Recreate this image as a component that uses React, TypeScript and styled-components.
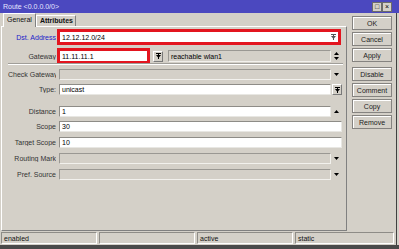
import React from "react";
import styled, { createGlobalStyle } from "styled-components";

const Global = createGlobalStyle`
  html, body { margin: 0; padding: 0; background: #d4d0c8; }
  body { font-family: "Liberation Sans", Arial, sans-serif; font-size: 7px; color: #222; }
`;

const Window = styled.div`
  width: 399px;
  height: 249px;
  box-sizing: border-box;
  display: flex;
  flex-direction: column;
  overflow: hidden;
  border-bottom: 4px solid #4a4a4a;
`;

const TitleBar = styled.div`
  height: 13px;
  flex: none;
  background: #4b48bf;
  display: flex;
  align-items: center;
  padding: 0 7px 0 3px;
  color: #e6e6ff;
`;

const TitleButtons = styled.div`
  margin-left: auto;
  display: flex;
`;

const TitleBtn = styled.div`
  width: 8px;
  height: 8px;
  background: #d4d0c8;
  border: 1px solid #6a6a6a;
  display: flex;
  align-items: center;
  justify-content: center;
  font-size: 7px;
  line-height: 1;
  color: #000;
`;

const Frame = styled.div`
  width: 397px;
  box-sizing: border-box;
  border-right: 1px solid #404040;
  display: flex;
  flex-direction: column;
  flex: 1;
`;

const Body = styled.div`
  height: 218px;
  display: flex;
`;

const Left = styled.div`
  width: 347px;
  display: flex;
  flex-direction: column;
`;

const Tabs = styled.div`
  height: 13px;
  display: flex;
  align-items: flex-end;
  padding-left: 3px;
  position: relative;
  z-index: 1;
`;

const Tab = styled.div<{ $active?: boolean }>`
  box-sizing: border-box;
  height: ${(p) => (p.$active ? "14px" : "11px")};
  margin-bottom: ${(p) => (p.$active ? "-1px" : "0")};
  padding: ${(p) => (p.$active ? "2px 3px 0 3px" : "1px 2px 0 3px")};
  background: #d4d0c8;
  border-top: 1px solid #ffffff;
  border-left: 1px solid #ffffff;
  border-right: 1px solid #808080;
  font-weight: ${(p) => (p.$active ? "normal" : "bold")};
  color: #111;
  white-space: nowrap;
`;

const Panel = styled.div`
  margin-left: 1px;
  width: 346px;
  height: 205px;
  box-sizing: border-box;
  border: 1px solid;
  border-color: #ffffff #808080 #808080 #ffffff;
  padding: 4px 4px 0 1px;
  display: flex;
  flex-direction: column;
`;

const Row = styled.div<{ $mt?: number; $h?: number }>`
  display: grid;
  grid-template-columns: 53px 283px;
  column-gap: 3px;
  align-items: center;
  height: ${(p) => p.$h ?? 11}px;
  margin-top: ${(p) => p.$mt ?? 0}px;
`;

const Label = styled.div<{ $blue?: boolean }>`
  padding-left: 5px;
  overflow: hidden;
  white-space: nowrap;
  text-align: right;
  color: ${(p) => (p.$blue ? "#1c1cc8" : "#333")};
`;

const Cell = styled.div`
  display: flex;
  align-items: center;
  height: 100%;
`;

const Field = styled.div<{ $w: number; $h?: number; $ml?: number; $disabled?: boolean; $red?: boolean }>`
  box-sizing: border-box;
  width: ${(p) => p.$w}px;
  height: ${(p) => (p.$h ? `${p.$h}px` : "100%")};
  margin-left: ${(p) => p.$ml ?? 0}px;
  flex: none;
  display: flex;
  align-items: center;
  padding: 0 2px;
  white-space: nowrap;
  overflow: hidden;
  color: #000;
  background: ${(p) => (p.$disabled ? "#d4d0c8" : "#ffffff")};
  border: 1px solid;
  border-color: ${(p) =>
    p.$red ? "#e3151f" : p.$disabled ? "#9a9893 #f2f1ed #f2f1ed #9a9893" : "#8e8c87 #e8e7e3 #e8e7e3 #8e8c87"};
  box-shadow: ${(p) => (p.$red ? "0 0 0 2px #e3151f" : "none")};
`;

const IconSlot = styled.div`
  width: 11px;
  height: 100%;
  display: flex;
  align-items: center;
  justify-content: center;
  flex: none;
`;

const SmallBtn = styled.div<{ $ml?: number }>`
  box-sizing: border-box;
  width: 10px;
  height: 11px;
  margin-left: ${(p) => p.$ml ?? 0}px;
  flex: none;
  background: #d4d0c8;
  border: 1px solid;
  border-color: #ffffff #7a7a7a #7a7a7a #ffffff;
  display: flex;
  align-items: center;
  justify-content: center;
`;

const InnerIcon = styled.span`
  margin-left: auto;
  display: flex;
  align-items: center;
`;

const Separator = styled.div`
  margin: 3px 0 0 5px;
  width: 335px;
  height: 0;
  border-top: 1px solid #a09e99;
  border-bottom: 1px solid #ffffff;
`;

const Right = styled.div`
  flex: 1;
  display: flex;
  flex-direction: column;
  padding: 3px 0 0 5px;
  gap: 2px;
`;

const Button = styled.div<{ $mt?: number }>`
  box-sizing: border-box;
  width: 40px;
  height: 14px;
  margin-top: ${(p) => p.$mt ?? 0}px;
  background: #d4d0c8;
  border: 1px solid #858380;
  box-shadow: inset 1px 1px 0 #ffffff;
  display: flex;
  align-items: center;
  justify-content: center;
  color: #222;
`;

const StatusBar = styled.div`
  height: 14px;
  display: flex;
  gap: 2px;
  padding: 1px 0 1px 1px;
  box-sizing: border-box;
`;

const StatusCell = styled.div<{ $w: number }>`
  box-sizing: border-box;
  width: ${(p) => p.$w}px;
  height: 12px;
  border: 1px solid;
  border-color: #8e8c87 #ffffff #ffffff #8e8c87;
  padding-left: 2px;
  display: flex;
  align-items: center;
  color: #111;
`;

type GlyphKind = "down" | "up" | "updown" | "bardown";

const Glyph = ({ kind, color = "#000" }: { kind: GlyphKind; color?: string }) => {
  if (kind === "down")
    return (
      <svg width="5" height="3" viewBox="0 0 5 3">
        <polygon points="0,0 5,0 2.5,3" fill={color} />
      </svg>
    );
  if (kind === "up")
    return (
      <svg width="5" height="3" viewBox="0 0 5 3">
        <polygon points="0,3 5,3 2.5,0" fill={color} />
      </svg>
    );
  if (kind === "updown")
    return (
      <svg width="5" height="8" viewBox="0 0 5 8">
        <polygon points="0,3 5,3 2.5,0" fill={color} />
        <polygon points="0,5 5,5 2.5,8" fill={color} />
      </svg>
    );
  return (
    <svg width="5" height="6" viewBox="0 0 5 6">
      <rect x="0" y="0" width="5" height="1" fill={color} />
      <polygon points="0,2 5,2 2.5,5" fill={color} />
      <rect x="2" y="1" width="1" height="5" fill={color} />
    </svg>
  );
};

export default function App() {
  return (
    <>
      <Global />
      <Window>
        <TitleBar>
          <span>Route &lt;0.0.0.0/0&gt;</span>
          <TitleButtons>
            <TitleBtn>□</TitleBtn>
            <TitleBtn>×</TitleBtn>
          </TitleButtons>
        </TitleBar>
        <Frame>
          <Body>
            <Left>
              <Tabs>
                <Tab $active>General</Tab>
                <Tab>Attributes</Tab>
              </Tabs>
              <Panel>
                <Row $h={12}>
                  <Label $blue>Dst. Address</Label>
                  <Cell>
                    <Field $w={280} $red>
                      12.12.12.0/24
                      <InnerIcon>
                        <Glyph kind="bardown" color="#555" />
                      </InnerIcon>
                    </Field>
                  </Cell>
                </Row>
                <Row $h={10} $mt={7}>
                  <Label>Gateway</Label>
                  <Cell>
                    <Field $w={89} $red>
                      11.11.11.1
                    </Field>
                    <SmallBtn $ml={5}>
                      <Glyph kind="bardown" />
                    </SmallBtn>
                    <Field $w={163} $h={12} $ml={5} $disabled>
                      reachable wlan1
                    </Field>
                    <IconSlot>
                      <Glyph kind="updown" />
                    </IconSlot>
                  </Cell>
                </Row>
                <Separator />
                <Row $mt={4}>
                  <Label>Check Gateway</Label>
                  <Cell>
                    <Field $w={272} $disabled />
                    <IconSlot>
                      <Glyph kind="down" />
                    </IconSlot>
                  </Cell>
                </Row>
                <Row $mt={4}>
                  <Label>Type:</Label>
                  <Cell>
                    <Field $w={272}>unicast</Field>
                    <SmallBtn $ml={1}>
                      <Glyph kind="bardown" />
                    </SmallBtn>
                  </Cell>
                </Row>
                <Row $mt={11}>
                  <Label>Distance</Label>
                  <Cell>
                    <Field $w={272}>1</Field>
                    <IconSlot>
                      <Glyph kind="up" />
                    </IconSlot>
                  </Cell>
                </Row>
                <Row $mt={4}>
                  <Label>Scope</Label>
                  <Cell>
                    <Field $w={283}>30</Field>
                  </Cell>
                </Row>
                <Row $mt={5}>
                  <Label>Target Scope</Label>
                  <Cell>
                    <Field $w={283}>10</Field>
                  </Cell>
                </Row>
                <Row $mt={5}>
                  <Label>Routing Mark</Label>
                  <Cell>
                    <Field $w={272} $disabled />
                    <IconSlot>
                      <Glyph kind="down" />
                    </IconSlot>
                  </Cell>
                </Row>
                <Row $mt={5}>
                  <Label>Pref. Source</Label>
                  <Cell>
                    <Field $w={272} $disabled />
                    <IconSlot>
                      <Glyph kind="down" />
                    </IconSlot>
                  </Cell>
                </Row>
              </Panel>
            </Left>
            <Right>
              <Button>OK</Button>
              <Button>Cancel</Button>
              <Button>Apply</Button>
              <Button $mt={3}>Disable</Button>
              <Button>Comment</Button>
              <Button>Copy</Button>
              <Button>Remove</Button>
            </Right>
          </Body>
          <StatusBar>
            <StatusCell $w={96}>enabled</StatusCell>
            <StatusCell $w={96} />
            <StatusCell $w={96}>active</StatusCell>
            <StatusCell $w={99}>static</StatusCell>
          </StatusBar>
        </Frame>
      </Window>
    </>
  );
}
